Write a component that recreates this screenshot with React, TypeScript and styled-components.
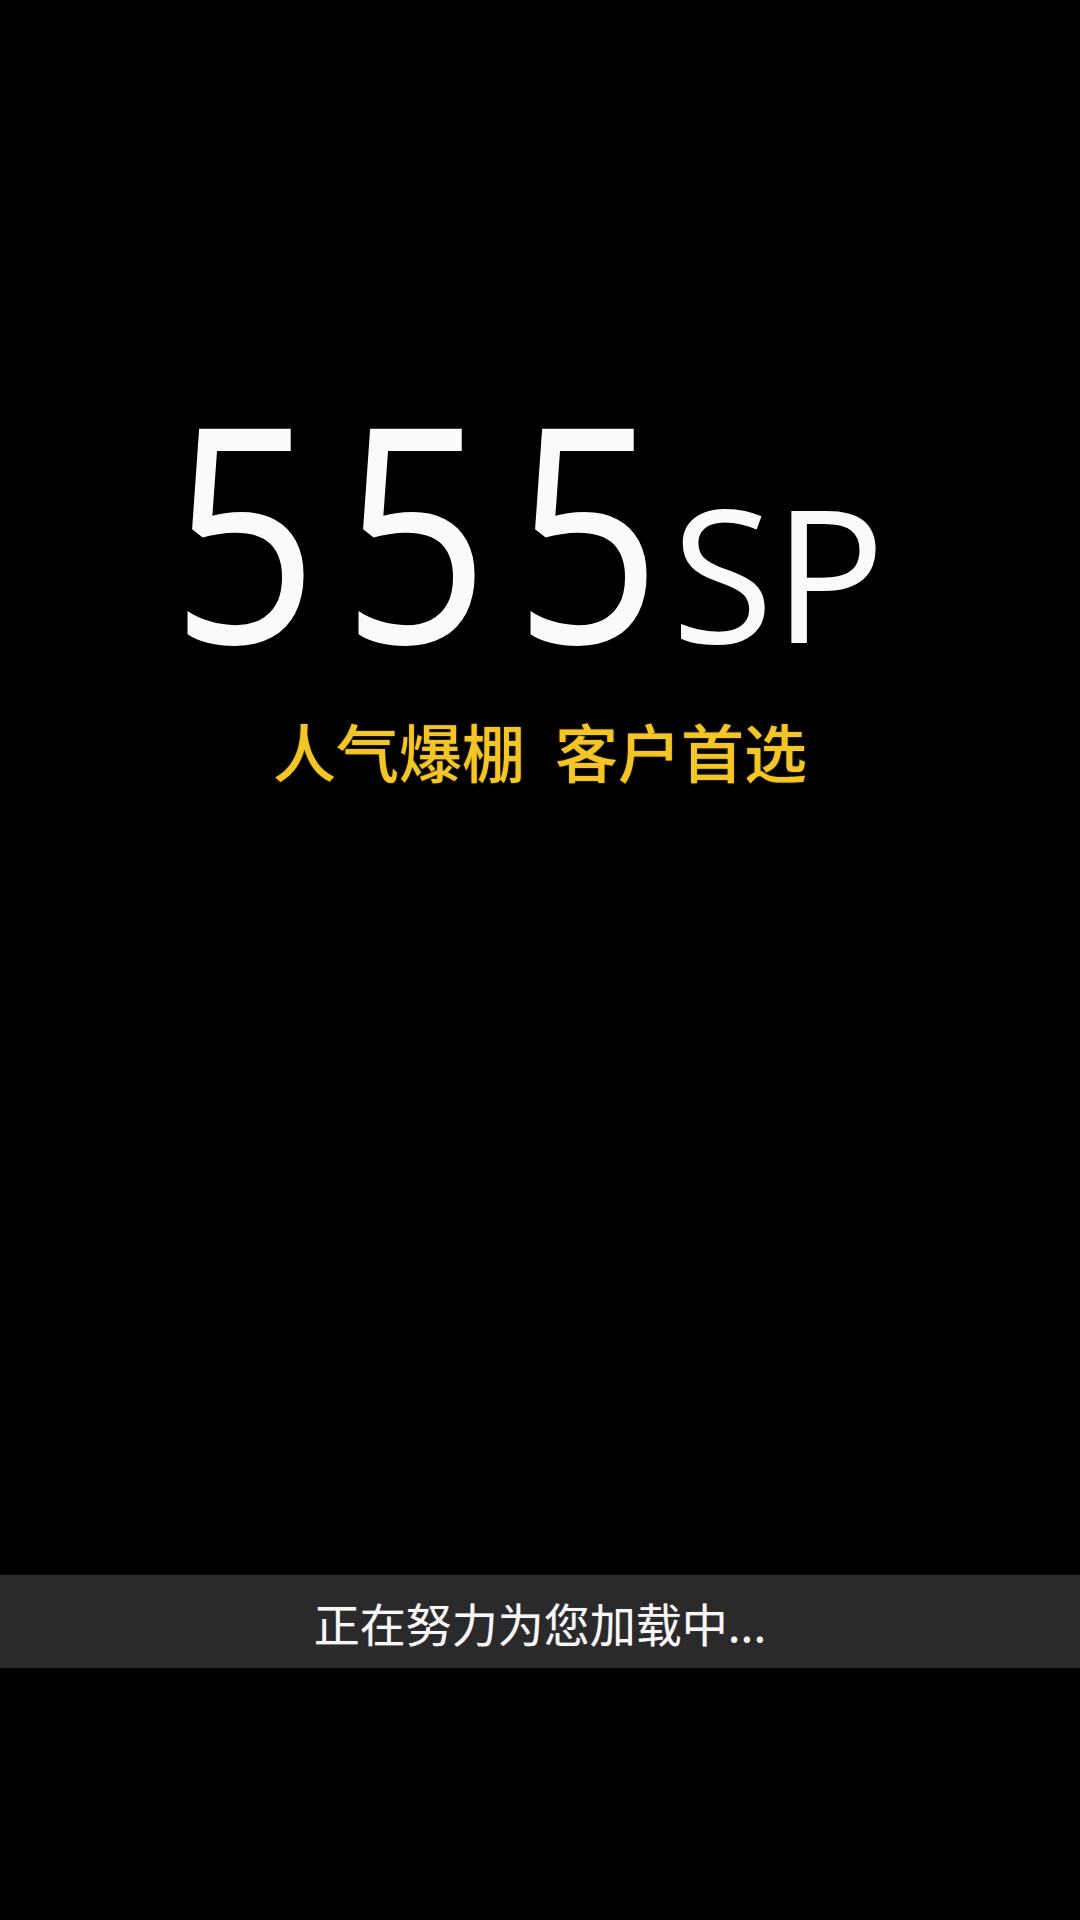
import React from "react";
import styled, { createGlobalStyle } from "styled-components";

const GlobalStyle = createGlobalStyle`
  html, body {
    margin: 0;
    padding: 0;
    background: #000;
  }
  #root {
    min-height: 1920px;
  }
`;

const Page = styled.div`
  width: 1080px;
  height: 1920px;
  box-sizing: border-box;
  background: #000;
  display: flex;
  flex-direction: column;
  padding-top: 377px;
  padding-bottom: 252px;
  overflow: hidden;
`;

const Logo = styled.div`
  display: flex;
  justify-content: center;
  align-items: baseline;
  color: #fafafa;
  font-family: "Open Sans", "Noto Sans", sans-serif;
  line-height: 1;
  padding-right: 26px;
`;

const LogoNumber = styled.span`
  display: flex;
  align-items: baseline;
  font-size: 300px;
  font-weight: 400;
`;

const Digit = styled.span`
  display: inline-block;
  transform: scaleX(0.86);
  transform-origin: 8% 50%;
`;

const LogoSuffix = styled.span`
  font-size: 186px;
  font-weight: 400;
  margin-left: -12px;
`;

const Slogan = styled.div`
  margin-top: 41px;
  text-align: center;
  color: #f4c526;
  font-family: "Noto Sans CJK SC", "Noto Sans", sans-serif;
  font-size: 63px;
  font-weight: 500;
  line-height: 1;
  word-spacing: 16px;
  text-shadow: 0 0 2px rgba(200, 150, 0, 0.6);
`;

const Spacer = styled.div`
  flex: 1;
`;

const LoadingBar = styled.div`
  height: 93px;
  background: #2a2a2a;
  display: flex;
  align-items: center;
  justify-content: center;
  color: #f7f7f7;
  font-family: "Noto Sans CJK SC", "Noto Sans", sans-serif;
  font-size: 46px;
  line-height: 1;
  text-shadow: 0 0 1px rgba(255, 255, 255, 0.4);
`;

const number = "555";

export default function App() {
  return (
    <>
      <GlobalStyle />
      <Page>
        <Logo>
          <LogoNumber>
            {number.split("").map((d, i) => (
              <Digit key={i}>{d}</Digit>
            ))}
          </LogoNumber>
          <LogoSuffix>SP</LogoSuffix>
        </Logo>
        <Slogan>人气爆棚 客户首选</Slogan>
        <Spacer />
        <LoadingBar>正在努力为您加载中...</LoadingBar>
      </Page>
    </>
  );
}
